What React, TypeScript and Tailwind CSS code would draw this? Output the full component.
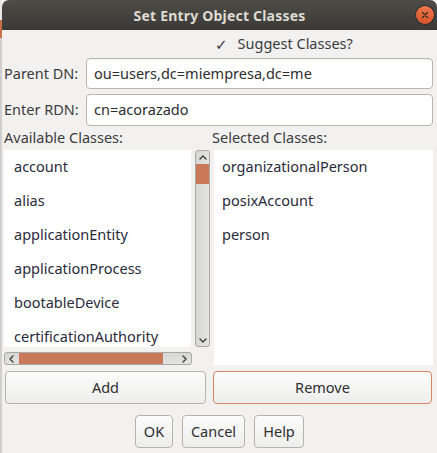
import React from "react";

const font = { fontFamily: '"Noto Sans", "Open Sans", "DejaVu Sans", sans-serif' };

function Chevron({ dir }: { dir: "up" | "down" | "left" | "right" }) {
  const paths: Record<string, string> = {
    up: "M2 6 L5 3 L8 6",
    down: "M2 4 L5 7 L8 4",
    left: "M6 2 L3 5 L6 8",
    right: "M4 2 L7 5 L4 8",
  };
  return (
    <svg width="10" height="10" viewBox="0 0 10 10">
      <path d={paths[dir]} fill="none" stroke="#3c3c3c" strokeWidth="1.4" strokeLinecap="round" strokeLinejoin="round" />
    </svg>
  );
}

function Btn({ children, className = "" }: { children: React.ReactNode; className?: string }) {
  return (
    <div
      className={`flex items-center justify-center rounded-[4px] border bg-gradient-to-b from-[#fcfcfc] to-[#ededec] text-[14.5px] text-[#2e2e2e] ${className}`}
    >
      {children}
    </div>
  );
}

export default function App() {
  const available = [
    "account",
    "alias",
    "applicationEntity",
    "applicationProcess",
    "bootableDevice",
    "certificationAuthority",
  ];
  const selected = ["organizationalPerson", "posixAccount", "person"];
  return (
    <div className="flex w-[437px] h-[453px] bg-[#f2f1f0]" style={font}>
      <div className="flex w-[2px] flex-col">
        <div className="h-[20px] bg-[#e8e8e8]" />
        <div className="h-[18px] bg-[#c8704c]" />
        <div className="flex-1 bg-[#cfcfcf]" />
      </div>
      <div className="flex flex-1 flex-col">
        <div className="relative flex h-[30px] items-center justify-center rounded-t-[7px] bg-gradient-to-b from-[#4d4c47] to-[#3b3a36]">
          <span className="text-[14px] font-bold text-[#dfdbd2] tracking-[0.2px]">Set Entry Object Classes</span>
          <div className="absolute right-[3px] top-[6px] flex h-[18px] w-[18px] items-center justify-center rounded-full bg-gradient-to-b from-[#f0764a] to-[#d9542a] shadow-[0_0_0_1px_#2f2e2b]">
            <svg width="8" height="8" viewBox="0 0 8 8">
              <path d="M1.5 1.5 L6.5 6.5 M6.5 1.5 L1.5 6.5" stroke="#3a2a22" strokeWidth="1.4" strokeLinecap="round" />
            </svg>
          </div>
        </div>
        <div className="flex flex-1 flex-col px-[2px] text-[14.5px] text-[#3c3c3c]">
          <div className="flex h-[28px] items-center pl-[211px]">
            <span className="mr-[10px] text-[15px] text-[#3c3c3c]">✓</span>
            <span>Suggest Classes?</span>
          </div>
          <div className="flex h-[31px] items-center">
            <span className="w-[82px]">Parent DN:</span>
            <div className="flex h-full flex-1 items-center rounded-[4px] border border-[#b6b6b3] bg-white pl-[7px] text-[#2e2e2e] shadow-[inset_0_1px_1px_rgba(0,0,0,0.05)] mr-[2px]">
              ou=users,dc=miempresa,dc=me
            </div>
          </div>
          <div className="mt-[5px] flex h-[32px] items-center">
            <span className="w-[82px]">Enter RDN:</span>
            <div className="flex h-full flex-1 items-center rounded-[4px] border border-[#b6b6b3] bg-white pl-[7px] text-[#2e2e2e] mr-[2px]">
              cn=acorazado
            </div>
          </div>
          <div className="flex h-[24px] items-center">
            <span className="w-[208px]">Available Classes:</span>
            <span>Selected Classes:</span>
          </div>
          <div className="flex h-[215px]">
            <div className="flex w-[206px] flex-col">
              <div className="flex h-[197px]">
                <div className="flex w-[187px] flex-col overflow-hidden bg-white pl-[10px] text-[#2a2a3a]">
                  {available.map((a) => (
                    <div key={a} className="flex h-[34px] shrink-0 items-center whitespace-nowrap">
                      {a}
                    </div>
                  ))}
                </div>
                <div className="ml-[4px] flex w-[15px] flex-col rounded-[3px] border border-[#a8a8a6] bg-gradient-to-r from-[#d6d6d4] to-[#e4e4e2]">
                  <div className="flex h-[13px] items-center justify-center">
                    <Chevron dir="up" />
                  </div>
                  <div className="h-[20px] bg-[#c97957]" />
                  <div className="flex-1" />
                  <div className="flex h-[13px] items-center justify-center">
                    <Chevron dir="down" />
                  </div>
                </div>
              </div>
              <div className="mt-[5px] flex h-[15px] w-[188px] items-center rounded-[3px] border border-[#a8a8a6] bg-gradient-to-b from-[#d6d6d4] to-[#e4e4e2]">
                <div className="flex w-[14px] items-center justify-center">
                  <Chevron dir="left" />
                </div>
                <div className="h-full w-[144px] bg-[#c97957]" />
                <div className="flex-1" />
                <div className="flex w-[14px] items-center justify-center">
                  <Chevron dir="right" />
                </div>
              </div>
            </div>
            <div className="ml-[4px] mr-[2px] flex flex-1 flex-col bg-white pl-[8px] text-[#2a2a3a]">
              {selected.map((a) => (
                <div key={a} className="flex h-[34px] shrink-0 items-center">
                  {a}
                </div>
              ))}
            </div>
          </div>
          <div className="mt-[6px] flex h-[33px] gap-[7px] pl-[1px] pr-[3px]">
            <Btn className="w-[201px] border-[#b3b3b0]">Add</Btn>
            <Btn className="flex-1 border-[#d98463]">Remove</Btn>
          </div>
          <div className="mt-[11px] flex h-[33px] justify-center gap-[9px]">
            <Btn className="w-[38px] border-[#b3b3b0]">OK</Btn>
            <Btn className="w-[63px] border-[#b3b3b0]">Cancel</Btn>
            <Btn className="w-[50px] border-[#b3b3b0]">Help</Btn>
          </div>
        </div>
      </div>
    </div>
  );
}
